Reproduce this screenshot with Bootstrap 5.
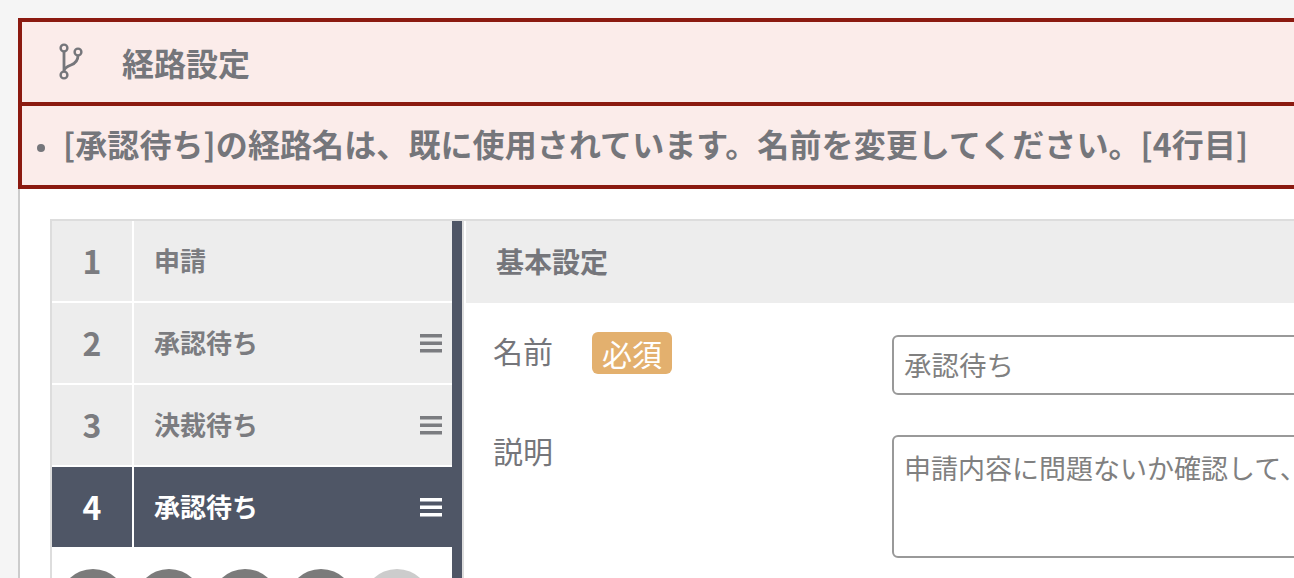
<!DOCTYPE html>
<html lang="ja">
<head>
<meta charset="utf-8">
<title>経路設定</title>
<link href="https://cdn.jsdelivr.net/npm/bootstrap@5.3.0/dist/css/bootstrap.min.css" rel="stylesheet">
<style>
html, body { height: 578px; overflow: hidden; }
body { background: #f5f5f5; font-family: "Noto Sans CJK JP", "Liberation Sans", sans-serif; color: #75767b; }
.shell { width: 1900px; margin: 18px 0 0 18px; }
.err-box { border: 4px solid #8b1a10; background: #fbecea; }
.err-head { height: 84px; padding-left: 34px; gap: 36px; font-size: 32px; font-weight: 700; border-bottom: 4px solid #8b1a10; }
.err-icon { margin-top: 4px; }
.err-msg { height: 79px; padding-left: 15px; gap: 18px; font-size: 32px; font-weight: 700; letter-spacing: .1px; margin: 0; }
.err-dot { width: 8px; height: 8px; border-radius: 50%; background: #75767b; flex: none; margin-top: 4px; }
.err-line { margin-bottom: 6px; }
.sheet { background: #fff; border-left: 2px solid #ccc; padding: 30px; height: 500px; }
.pane { border: 2px solid #ddd; border-bottom: 0; height: 100%; }
.steps { width: 410px; flex: none; border-right: 10px solid #4f5666; }
.step { height: 80px; margin-bottom: 2px; background: #ededed; font-weight: 700; color: #7b7c80; }
.step-no { width: 80px; border-right: 2px solid #fff; box-sizing: content-box; font-size: 32px; }
.step-name { padding: 0 10px 0 20px; font-size: 26px; }
.step-text { margin-bottom: 3px; }
.step.on { background: #4f5666; color: #fff; }
.dots { padding: 20px 0 0 7px; gap: 8px; }
.dot { width: 68px; height: 68px; border-radius: 50%; background: #7b7b7b; flex: none; }
.dot.off { background: #ccc; }
.detail { border-left: 2px solid #ddd; padding-left: 2px; }
.detail-head { height: 82px; background: #ededed; padding-left: 30px; padding-bottom: 3px; font-size: 28px; font-weight: 700; }
.field { padding-left: 27px; }
.field-label { width: 399px; flex: none; font-size: 30px; line-height: 36px; gap: 39px; }
.field-plain { margin-top: -3px; }
.first-field { padding-top: 32px; }
.first-field .field-label { margin-top: -3px; height: 42px; }
.first-field .name-text { margin-bottom: 6px; }
.next-field { margin-top: 40px; }
.req { background: #e3b06e; color: #fff; width: 80px; height: 42px; border-radius: 6px; font-size: 30px; line-height: 1; }
.form-control.entry { border: 2px solid #999; border-radius: 6px; font-size: 27.500px; color: #808080; padding: 7px 10px 9px; height: 60px; line-height: 40px; box-shadow: none; }
textarea.form-control.entry { font-size: 27px; height: 123px; resize: none; padding: 11px 10px 8px; line-height: 40px; }
</style>
</head>
<body>
<div class="shell">
  <div class="err-box">
    <div class="err-head d-flex align-items-center">
      <svg class="err-icon" width="30" height="44" viewBox="0 0 30 44" fill="none" stroke="#75767b" stroke-width="2.4" aria-hidden="true">
        <circle cx="8" cy="6" r="3.4"/><circle cx="22" cy="10" r="3.4"/><circle cx="8" cy="33" r="3.4"/>
        <path d="M8 9.5V29.5M22 13.5c0 6-3 8-7 9.5-3.500 1.300-7 3-7 6.500" stroke-width="2.800"/>
      </svg>
      <span>経路設定</span>
    </div>
    <ul class="err-msg list-unstyled d-flex align-items-center">
      <li class="err-dot"></li>
      <li class="err-line">[承認待ち]の経路名は、既に使用されています。名前を変更してください。[4行目]</li>
    </ul>
  </div>
  <div class="sheet">
    <div class="pane d-flex">
      <div class="steps">
        <div class="step d-flex">
          <div class="step-no d-flex align-items-center justify-content-center"><span class="step-text">1</span></div>
          <div class="step-name flex-grow-1 d-flex align-items-center justify-content-between"><span class="step-text">申請</span></div>
        </div>
        <div class="step d-flex">
          <div class="step-no d-flex align-items-center justify-content-center"><span class="step-text">2</span></div>
          <div class="step-name flex-grow-1 d-flex align-items-center justify-content-between"><span class="step-text">承認待ち</span>
            <svg width="22" height="19" viewBox="0 0 22 19" fill="currentColor" aria-hidden="true"><rect width="22" height="3.500"/><rect y="7.500" width="22" height="3.500"/><rect y="15" width="22" height="3.500"/></svg>
          </div>
        </div>
        <div class="step d-flex">
          <div class="step-no d-flex align-items-center justify-content-center"><span class="step-text">3</span></div>
          <div class="step-name flex-grow-1 d-flex align-items-center justify-content-between"><span class="step-text">決裁待ち</span>
            <svg width="22" height="19" viewBox="0 0 22 19" fill="currentColor" aria-hidden="true"><rect width="22" height="3.500"/><rect y="7.500" width="22" height="3.500"/><rect y="15" width="22" height="3.500"/></svg>
          </div>
        </div>
        <div class="step on d-flex">
          <div class="step-no d-flex align-items-center justify-content-center"><span class="step-text">4</span></div>
          <div class="step-name flex-grow-1 d-flex align-items-center justify-content-between"><span class="step-text">承認待ち</span>
            <svg width="22" height="19" viewBox="0 0 22 19" fill="currentColor" aria-hidden="true"><rect width="22" height="3.500"/><rect y="7.500" width="22" height="3.500"/><rect y="15" width="22" height="3.500"/></svg>
          </div>
        </div>
        <div class="dots d-flex">
          <div class="dot"></div><div class="dot"></div><div class="dot"></div><div class="dot"></div><div class="dot off"></div>
        </div>
      </div>
      <div class="detail flex-grow-1">
        <div class="detail-head d-flex align-items-center">基本設定</div>
        <div class="field first-field d-flex align-items-start">
          <div class="field-label d-flex align-items-center"><span class="name-text">名前</span><span class="req d-flex align-items-center justify-content-center">必須</span></div>
          <input class="form-control entry" type="text" value="承認待ち">
        </div>
        <div class="field next-field d-flex align-items-start">
          <div class="field-label field-plain">説明</div>
          <textarea class="form-control entry">申請内容に問題ないか確認して、承認してください。</textarea>
        </div>
      </div>
    </div>
  </div>
</div>
<script src="https://cdn.jsdelivr.net/npm/bootstrap@5.3.0/dist/js/bootstrap.bundle.min.js"></script>
</body>
</html>
